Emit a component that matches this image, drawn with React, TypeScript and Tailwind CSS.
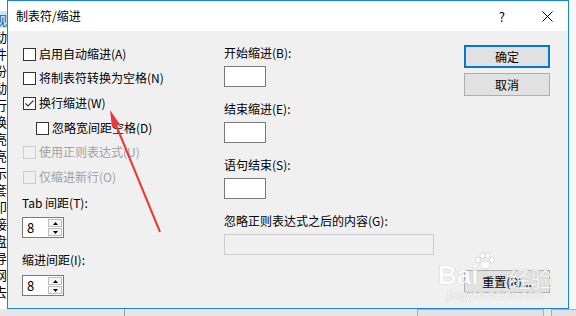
import type { ReactNode } from 'react'

const FONT = "font-['Microsoft_YaHei_UI','Noto_Sans_CJK_SC',sans-serif]"

const bgChars = ['视', '动', '件', '份', '动', '行', '换', '亮', '亮', '示', '套', '印', '接', '盘', '导', '网', '去']

function CheckBox({ checked, disabled }: { checked?: boolean; disabled?: boolean }) {
  return (
    <span
      className={`w-[13px] h-[13px] border flex items-center justify-center shrink-0 ${
        disabled ? 'border-[#cccccc] bg-[#f0f0f0]' : 'border-[#333333] bg-white'
      }`}
    >
      {checked && (
        <svg width="11" height="11" viewBox="0 0 11 11">
          <path d="M1.5 5.5 L4 8 L9.5 2.5" fill="none" stroke="#333" strokeWidth="1.1" />
        </svg>
      )}
    </span>
  )
}

function CheckRow({
  label,
  h,
  checked,
  disabled,
  indent,
}: {
  label: string
  h: string
  checked?: boolean
  disabled?: boolean
  indent?: boolean
}) {
  return (
    <div className={`flex items-center gap-[3px] ${h} ${indent ? 'pl-[14px]' : 'pl-px'}`}>
      <CheckBox checked={checked} disabled={disabled} />
      <span className={`text-[12px] leading-none ${disabled ? 'text-[#a0a0a0]' : 'text-black'}`}>{label}</span>
    </div>
  )
}

function Spinner() {
  return (
    <div className="flex w-[42px] h-[21px] border border-[#7a7a7a] bg-white">
      <div className="flex-1 flex items-center pl-[4px] text-[13px] leading-none text-black">8</div>
      <div className="w-[16px] flex flex-col gap-px p-px bg-white">
        <div className="flex-1 border border-[#bcbcbc] bg-[#f5f5f5] flex items-center justify-center">
          <svg width="5" height="3" viewBox="0 0 5 3">
            <path d="M0 3 L2.5 0 L5 3 Z" fill="#000" />
          </svg>
        </div>
        <div className="flex-1 border border-[#bcbcbc] bg-[#f5f5f5] flex items-center justify-center">
          <svg width="5" height="3" viewBox="0 0 5 3">
            <path d="M0 0 L2.5 3 L5 0 Z" fill="#000" />
          </svg>
        </div>
      </div>
    </div>
  )
}

function Field({ label, mt }: { label: string; mt: string }) {
  return (
    <div className={mt}>
      <div className="h-[18px] flex items-center text-[12px] leading-none text-black">{label}</div>
      <div className="mt-[4px] w-[42px] h-[21px] border border-[#7a7a7a] bg-white" />
    </div>
  )
}

function Button({ children, primary, className = '' }: { children: ReactNode; primary?: boolean; className?: string }) {
  return (
    <div
      className={`w-[86px] h-[23px] flex items-center justify-center bg-[#e1e1e1] text-[12px] leading-none text-black ${
        primary ? 'border-2 border-[#0078d7]' : 'border border-[#adadad]'
      } ${className}`}
    >
      {children}
    </div>
  )
}

export default function App() {
  return (
    <div className={`relative w-[576px] h-[316px] overflow-hidden bg-[#e6e6e6] ${FONT}`}>
      <div className="flex h-[309px]">
        {/* window behind the dialog */}
        <div className="w-[7px] bg-white overflow-hidden pt-[11px]">
          <div className="ml-[-6px] flex flex-col">
            {bgChars.map((c, i) => (
              <span
                key={i}
                className={`h-[17px] w-[14px] text-[13px] leading-[17px] ${i === 0 ? 'bg-[#cce4f7] text-[#0063b1]' : 'text-black'}`}
              >
                {c}
              </span>
            ))}
          </div>
        </div>

        {/* dialog */}
        <div className="w-[562px] flex flex-col border border-[#1883d7] bg-[#f0f0f0]">
          <div className="h-[30px] bg-white flex items-center shrink-0">
            <span className="ml-[8px] text-[12px] leading-none text-black">制表符/缩进</span>
            <span className="ml-auto mr-[37px] text-[13px] leading-none text-black">?</span>
            <svg className="mr-[15px]" width="11" height="11" viewBox="0 0 11 11">
              <path d="M0.5 0.5 L10.5 10.5 M10.5 0.5 L0.5 10.5" stroke="#000" strokeWidth="1" />
            </svg>
          </div>

          <div className="flex flex-1">
            <div className="w-[216px] pl-[14px] pt-[11px] flex flex-col">
              <CheckRow label="启用自动缩进(A)" h="h-[24px]" />
              <CheckRow label="将制表符转换为空格(N)" h="h-[24px]" />
              <CheckRow label="换行缩进(W)" h="h-[26px]" checked />
              <CheckRow label="忽略宽间距空格(D)" h="h-[24px]" indent />
              <CheckRow label="使用正则表达式(U)" h="h-[24px]" disabled />
              <CheckRow label="仅缩进新行(O)" h="h-[26px]" disabled />
              <div className="h-[26px] flex items-center text-[12px] leading-none text-black">Tab 间距(T):</div>
              <div className="mt-px">
                <Spinner />
              </div>
              <div className="mt-[10px] h-[24px] flex items-center text-[12px] leading-none text-black">缩进间距(I):</div>
              <div className="mt-[3px]">
                <Spinner />
              </div>
            </div>

            <div className="w-[240px] pt-[13px] flex flex-col">
              <Field label="开始缩进(B):" mt="" />
              <Field label="结束缩进(E):" mt="mt-[13px]" />
              <Field label="语句结束(S):" mt="mt-[13px]" />
              <div className="mt-[13px]">
                <div className="h-[18px] flex items-center text-[12px] leading-none text-black">忽略正则表达式之后的内容(G):</div>
                <div className="mt-[4px] w-[210px] h-[21px] border border-[#cccccc] bg-[#f0f0f0]" />
              </div>
            </div>

            <div className="flex flex-col pt-[14px] pb-[15px]">
              <Button primary>确定</Button>
              <Button className="mt-[5px]">取消</Button>
              <Button className="mt-auto">重置(R)...</Button>
            </div>
          </div>
        </div>

        <div className="flex-1 bg-[#f7f7f7]" />
      </div>

      {/* window behind, lower edge */}
      <div className="flex h-[7px] bg-[#e6e6e6]">
        <div className="ml-[124px] w-px bg-[#9a9a9a]" />
        <div className="ml-[292px] w-[127px] border-x border-t border-[#adadad] bg-[#e1e1e1]" />
        <div className="ml-[7px] flex-1 border-l border-t border-[#adadad] bg-[#e1e1e1]" />
      </div>

      {/* watermark paw */}
      <svg className="absolute left-[474px] top-[252px] pointer-events-none opacity-80" width="22" height="18" viewBox="0 0 22 18">
        <g fill="#fff" stroke="#b0b0b0" strokeWidth="0.5">
          <ellipse cx="4" cy="8" rx="2.5" ry="3" />
          <ellipse cx="8.5" cy="3.5" rx="2.5" ry="3" />
          <ellipse cx="13.5" cy="3.5" rx="2.5" ry="3" />
          <ellipse cx="18" cy="8" rx="2.5" ry="3" />
          <ellipse cx="11" cy="13" rx="5" ry="4" />
        </g>
      </svg>

      {/* watermark */}
      <div className="absolute left-[438px] top-[262px] flex flex-col items-center text-white opacity-80 pointer-events-none [text-shadow:0_0_1px_#9a9a9a]">
        <div className="flex items-end gap-[2px] leading-none">
          <span className="text-[26px] font-bold font-['Liberation_Sans',sans-serif]">Bai</span>
          <span className="text-[22px] ml-[28px]">经验</span>
        </div>
        <span className="mt-[1px] text-[12px] leading-none font-['Liberation_Sans',sans-serif]">jingyan.baidu.com</span>
      </div>

      {/* red arrow */}
      <svg className="absolute left-0 top-0 pointer-events-none" width="576" height="316">
        <line x1="160" y1="232" x2="116" y2="125" stroke="#e8393a" strokeWidth="2" />
        <path d="M110 110 L120 124.5 L112 127.5 Z" fill="#e8393a" />
      </svg>
    </div>
  )
}
